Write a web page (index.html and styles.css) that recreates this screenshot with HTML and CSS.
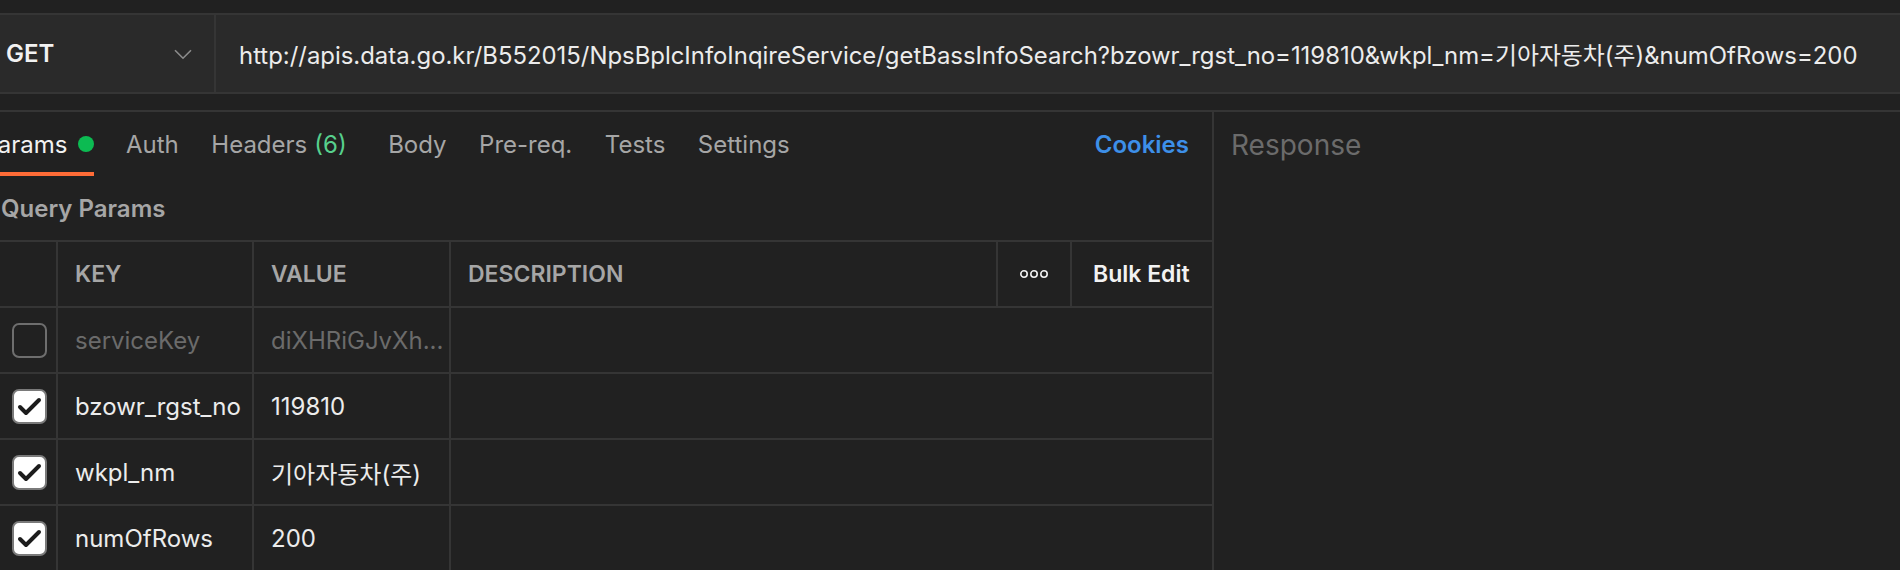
FILE: index.html
```html
<!DOCTYPE html>
<html lang="ko">
<head>
<meta charset="utf-8">
<title>Postman request</title>
<link rel="stylesheet" href="styles.css">
</head>
<body>
<div class="app">
  <div class="top-strip"></div>
  <div class="request-bar">
    <div class="method">
      <span class="method-name">GET</span>
      <svg class="chevron" width="18" height="11" viewBox="0 0 18 11"><path d="M1 1.2 L9 9.2 L17 1.2" fill="none" stroke="#8c8c8c" stroke-width="1.6"/></svg>
    </div>
    <div class="url">http://apis.data.go.kr/B552015/NpsBplcInfoInqireService/getBassInfoSearch?bzowr_rgst_no=119810&amp;wkpl_nm=기아자동차(주)&amp;numOfRows=200</div>
  </div>
  <div class="band"></div>
  <div class="panes">
    <div class="left-pane">
      <div class="tabs">
        <div class="tab active">Params <span class="dot"></span></div>
        <div class="tab">Auth</div>
        <div class="tab">Headers <span class="count">(6)</span></div>
        <div class="tab tab-body">Body</div>
        <div class="tab">Pre-req.</div>
        <div class="tab">Tests</div>
        <div class="tab">Settings</div>
        <div class="tab cookies">Cookies</div>
      </div>
      <div class="section-title">Query Params</div>
      <div class="grid">
        <div class="cell head"></div>
        <div class="cell head">KEY</div>
        <div class="cell head">VALUE</div>
        <div class="cell head">DESCRIPTION</div>
        <div class="cell head icon-cell"><svg width="30" height="10" viewBox="0 0 30 10"><circle cx="5" cy="5" r="3.2" fill="none" stroke="#f0f0f0" stroke-width="1.6"/><circle cx="15" cy="5" r="3.2" fill="none" stroke="#f0f0f0" stroke-width="1.6"/><circle cx="25" cy="5" r="3.2" fill="none" stroke="#f0f0f0" stroke-width="1.6"/></svg></div>
        <div class="cell head bulk">Bulk Edit</div>

        <div class="cell check"><span class="box"></span></div>
        <div class="cell dim">serviceKey</div>
        <div class="cell dim">diXHRiGJvXh...</div>
        <div class="cell desc"></div>

        <div class="cell check"><span class="box on"><svg width="31" height="31" viewBox="0 0 31 31"><path d="M6 16 L12 22 L25 9" fill="none" stroke="#1c1c1c" stroke-width="4" stroke-linecap="round" stroke-linejoin="round"/></svg></span></div>
        <div class="cell">bzowr_rgst_no</div>
        <div class="cell">119810</div>
        <div class="cell desc"></div>

        <div class="cell check"><span class="box on"><svg width="31" height="31" viewBox="0 0 31 31"><path d="M6 16 L12 22 L25 9" fill="none" stroke="#1c1c1c" stroke-width="4" stroke-linecap="round" stroke-linejoin="round"/></svg></span></div>
        <div class="cell">wkpl_nm</div>
        <div class="cell">기아자동차(주)</div>
        <div class="cell desc"></div>

        <div class="cell check"><span class="box on"><svg width="31" height="31" viewBox="0 0 31 31"><path d="M6 16 L12 22 L25 9" fill="none" stroke="#1c1c1c" stroke-width="4" stroke-linecap="round" stroke-linejoin="round"/></svg></span></div>
        <div class="cell">numOfRows</div>
        <div class="cell">200</div>
        <div class="cell desc"></div>
      </div>
    </div>
    <div class="right-pane">
      <div class="response-title">Response</div>
    </div>
  </div>
</div>
</body>
</html>
```
FILE: styles.css
```css
* { box-sizing: border-box; }
html, body {
  margin: 0;
  padding: 0;
  background: #212121;
  width: 1900px;
  height: 570px;
  overflow: hidden;
}
body {
  font-family: Inter, "Noto Sans CJK KR", sans-serif;
  color: #ececec;
}
.app {
  width: 1900px;
  height: 570px;
  display: flex;
  flex-direction: column;
}
.top-strip {
  height: 15px;
  border-bottom: 2px solid #353535;
  flex: none;
}
.request-bar {
  height: 79px;
  flex: none;
  display: flex;
  background: #2a2a2a;
  border-bottom: 2px solid #353535;
}
.method {
  width: 216px;
  flex: none;
  display: flex;
  align-items: center;
  justify-content: space-between;
  padding: 0 22px 0 6px;
  border-right: 2px solid #353535;
}
.method-name {
  font-size: 24px;
  font-weight: 600;
  color: #f2f2f2;
}
.chevron { margin-top: 2px; }
.url {
  display: flex;
  align-items: center;
  padding-left: 23px;
  font-size: 23.9px;
  color: #ececec;
  white-space: nowrap;
}
.band {
  height: 18px;
  flex: none;
  border-bottom: 2px solid #353535;
}
.panes {
  flex: 1;
  display: flex;
  min-height: 0;
}
.left-pane {
  width: 1214px;
  flex: none;
  border-right: 2px solid #353535;
}
.tabs {
  height: 64px;
  display: flex;
  align-items: stretch;
  gap: 32.5px;
  margin-left: -17.5px;
  padding-right: 23px;
}
.tab {
  display: flex;
  align-items: center;
  padding-top: 4px;
  border-bottom: 4px solid transparent;
  font-size: 24px;
  color: #a6a6a6;
  white-space: nowrap;
}
.tab.active {
  color: #f2f2f2;
  border-bottom-color: #ff6c37;
}
.dot {
  display: inline-block;
  width: 16px;
  height: 16px;
  border-radius: 50%;
  background: #0cbb52;
  margin-left: 10px;
}
.count {
  color: #57d08d;
  margin-left: 7px;
}
.tab-body { margin-left: 9px; }
.cookies {
  margin-left: auto;
  color: #3d8fe8;
  font-weight: 600;
}
.section-title {
  height: 64px;
  display: flex;
  align-items: center;
  padding-left: 1px;
  font-size: 24px;
  font-weight: 600;
  color: #a6a6a6;
}
.grid {
  display: grid;
  grid-template-columns: 58px 196px 197px 547px 74px 140px;
  grid-auto-rows: 66px;
  border-top: 2px solid #353535;
}
.cell {
  display: flex;
  align-items: center;
  padding-left: 17px;
  border-right: 2px solid #353535;
  border-bottom: 2px solid #353535;
  font-size: 24px;
  color: #ececec;
  white-space: nowrap;
  overflow: hidden;
}
.head {
  font-size: 23px;
  font-weight: 600;
  color: #a6a6a6;
}
.icon-cell {
  padding-left: 0;
  justify-content: center;
}
.bulk {
  color: #f2f2f2;
  padding-left: 21px;
  border-right: none;
}
.desc {
  grid-column: 4 / 7;
  border-right: none;
}
.dim { color: #6b6b6b; }
.check {
  padding-left: 12px;
}
.box {
  width: 35px;
  height: 35px;
  border: 2px solid #6e6e6e;
  border-radius: 7px;
  display: flex;
  align-items: center;
  justify-content: center;
  flex: none;
}
.box.on {
  background: #ffffff;
  border-color: #7a7a7a;
}
.right-pane {
  flex: 1;
  padding-left: 17px;
}
.response-title {
  height: 64px;
  display: flex;
  align-items: center;
  padding-top: 1px;
  font-size: 28px;
  color: #6b6b6b;
}
```
